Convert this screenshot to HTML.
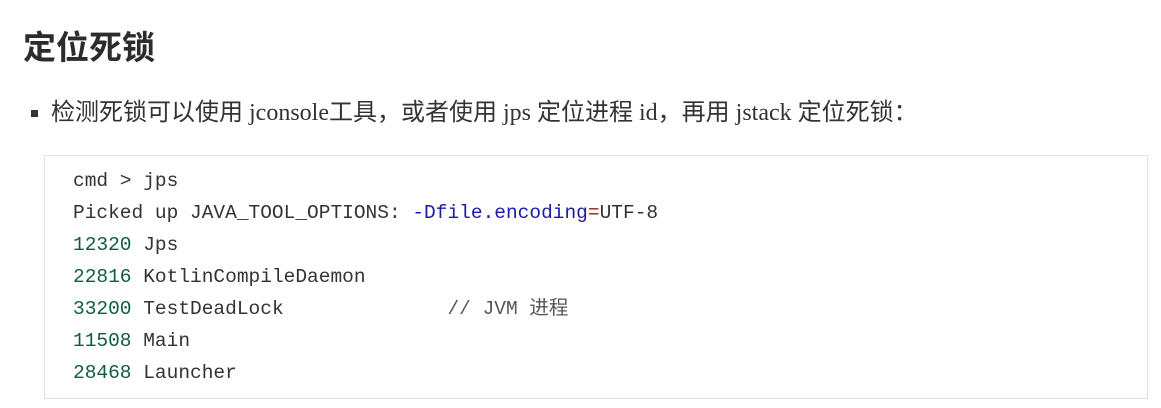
<!DOCTYPE html>
<html><head><meta charset="utf-8"><style>
body{margin:0;width:1161px;height:408px;background:#fff;overflow:hidden;position:relative;font-family:"Liberation Sans","Noto Sans CJK SC",sans-serif;color:#333}
h1{position:absolute;left:23px;top:23px;margin:0;font-size:33px;font-weight:bold;color:#2c2c2c;font-family:"Noto Sans CJK SC",sans-serif;line-height:44px}
.b{position:absolute;left:31px;top:110px;width:7px;height:7px;background:#333}
.p{position:absolute;left:51px;top:97px;font-size:24px;line-height:32px;font-family:"Liberation Serif","Noto Sans CJK SC",serif;color:#333;white-space:nowrap}
.code{position:absolute;left:44px;top:155px;width:1102px;height:242px;border:1px solid #e2e2e2;background:#fff}
pre{margin:0;position:absolute;left:28px;top:9px;font-family:"Liberation Mono","Noto Sans CJK SC",monospace;font-size:19.5px;line-height:32px;color:#333}
.n{color:#0f5c40}.k{color:#1a1aa6}.o{color:#981a1a}.c{color:#555}
</style></head><body>
<h1>定位死锁</h1>
<div class="b"></div>
<div class="p">检测死锁可以使用 jconsole工具，或者使用 jps 定位进程 id，再用 jstack 定位死锁：</div>
<div class="code"><pre>cmd &gt; jps
Picked up JAVA_TOOL_OPTIONS: <span class="k">-Dfile.encoding</span><span class="o">=</span>UTF-8
<span class="n">12320</span> Jps
<span class="n">22816</span> KotlinCompileDaemon
<span class="n">33200</span> TestDeadLock              <span class="c">// JVM 进程</span>
<span class="n">11508</span> Main
<span class="n">28468</span> Launcher</pre></div>
</body></html>
